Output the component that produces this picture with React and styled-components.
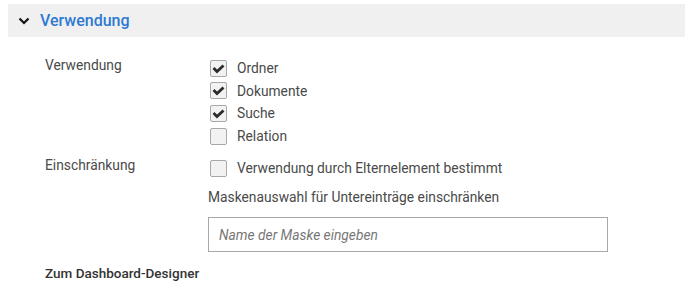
import React from "react";
import styled, { createGlobalStyle } from "styled-components";

const Global = createGlobalStyle`
  html, body { margin: 0; padding: 0; background: #fff; }
  body { font-family: Roboto, "Open Sans", sans-serif; color: #4a4a4a; }
`;

const Page = styled.div`
  padding: 4px 0 0 8px;
`;

const Header = styled.div`
  height: 33px;
  background: #f0f0f0;
  display: flex;
  align-items: center;
  padding-left: 10px;
  gap: 10px;
`;

const HeaderTitle = styled.span`
  color: #2d7ad3;
  font-size: 16px;
  font-weight: 500;
`;

const Form = styled.div`
  display: grid;
  grid-template-columns: 163px 1fr;
  padding: 22px 0 0 37px;
  row-gap: 14px;
  font-size: 13.8px;
`;

const Label = styled.div`
  color: #4a4a4a;
  line-height: 18px;
  margin-top: ${(p) => p.$top || 0}px;
`;

const Options = styled.div`
  display: flex;
  flex-direction: column;
  gap: 4.7px;
`;

const Option = styled.label`
  display: flex;
  align-items: center;
  gap: 10px;
  padding-left: 2px;
  line-height: 18px;
  color: #4a4a4a;
`;

const Box = styled.span`
  width: 15px;
  height: 15px;
  border: 1px solid #a8a8a8;
  border-radius: 2px;
  background: #f2f2f2;
  display: flex;
  align-items: center;
  justify-content: center;
`;

const Column = styled.div`
  display: flex;
  flex-direction: column;
`;

const Hint = styled.div`
  margin-top: 11px;
  line-height: 18px;
  color: #4a4a4a;
`;

const Input = styled.div`
  margin-top: 11px;
  box-sizing: border-box;
  width: 400px;
  height: 35px;
  border: 1px solid #a8a8a8;
  display: flex;
  align-items: center;
  padding-left: 10px;
  font-style: italic;
  color: #777;
`;

const Footer = styled.div`
  grid-column: 1 / span 2;
  font-weight: 500;
  font-size: 13.5px;
  color: #333;
  margin-top: -1px;
`;

const Check = () => (
  <svg width="13" height="11" viewBox="0 0 13 11">
    <path d="M1.5 5 L5 8.5 L11.5 2.5" fill="none" stroke="#2b2b2b" strokeWidth="2.8" />
  </svg>
);

const Checkbox = ({ checked, children }) => (
  <Option>
    <Box>{checked && <Check />}</Box>
    {children}
  </Option>
);

export default function App() {
  return (
    <>
      <Global />
      <Page>
        <Header>
          <svg width="12" height="8" viewBox="0 0 12 8">
            <path d="M1.5 1.5 L6 6 L10.5 1.5" fill="none" stroke="#111" strokeWidth="2.2" />
          </svg>
          <HeaderTitle>Verwendung</HeaderTitle>
        </Header>
        <Form>
          <Label $top={-3}>Verwendung</Label>
          <Options>
            <Checkbox checked>Ordner</Checkbox>
            <Checkbox checked>Dokumente</Checkbox>
            <Checkbox checked>Suche</Checkbox>
            <Checkbox>Relation</Checkbox>
          </Options>
          <Label $top={-3}>Einschränkung</Label>
          <Column>
            <Checkbox>Verwendung durch Elternelement bestimmt</Checkbox>
            <Hint>Maskenauswahl für Untereinträge einschränken</Hint>
            <Input>Name der Maske eingeben</Input>
          </Column>
          <Footer>Zum Dashboard-Designer</Footer>
        </Form>
      </Page>
    </>
  );
}
